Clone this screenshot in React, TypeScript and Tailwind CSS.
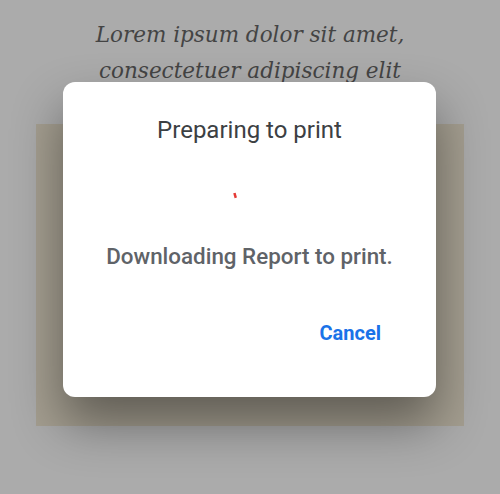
import React from "react";

export default function App() {
  return (
    <div className="relative w-[500px] h-[494px] overflow-hidden bg-[#ababab]">
      <div className="flex flex-col items-center pt-[17px]">
        <p
          className="text-center italic text-[21.5px] leading-[36px] text-[#444444]"
          style={{ fontFamily: '"DejaVu Serif", "Liberation Serif", serif' }}
        >
          Lorem ipsum dolor sit amet,
          <br />
          consectetuer adipiscing elit
        </p>
      </div>
      <div className="ml-[36px] mt-[35px] w-[428px] h-[302px] bg-[#a49e90]" />

      <div
        className="absolute left-[63px] top-[82px] w-[373px] h-[315px] bg-white rounded-[12px] shadow-[0_26px_50px_rgba(0,0,0,0.42)] flex flex-col items-center"
        style={{ fontFamily: 'Roboto, "Open Sans", sans-serif' }}
      >
        <h2 className="mt-[34px] h-[28px] text-[24px] leading-[28px] text-[#3c4043] font-normal">
          Preparing to print
        </h2>
        <div className="mt-[32px] h-[40px] w-[40px] relative">
          <svg width="40" height="40" viewBox="0 0 40 40" className="absolute left-[-15px] top-0">
            <rect x="19" y="17" width="2.5" height="5" fill="#e53935" transform="rotate(-15 20 20)" />
          </svg>
        </div>
        <p className="mt-[27px] h-[26px] text-[22.4px] leading-[26px] font-medium text-[#5f6368]">
          Downloading Report to print.
        </p>
        <div className="mt-[46px] w-full flex justify-end pr-[47px]">
          <button className="h-[36px] px-[8px] text-[20px] font-bold text-[#1a73e8]">
            Cancel
          </button>
        </div>
      </div>
    </div>
  );
}
